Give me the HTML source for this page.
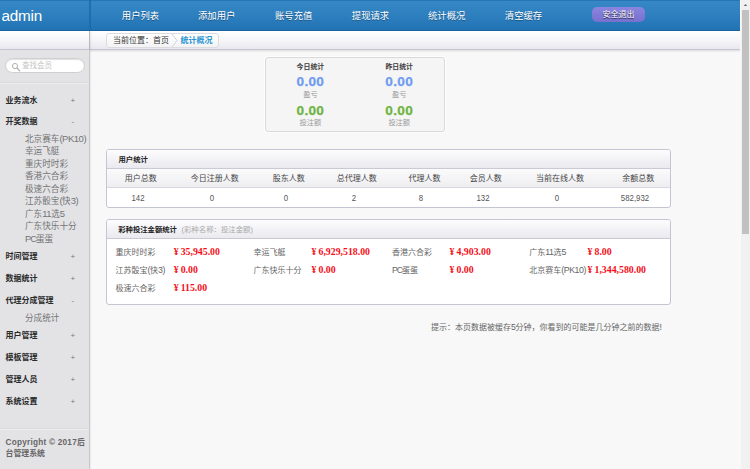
<!DOCTYPE html>
<html lang="zh-CN">
<head>
<meta charset="utf-8">
<title>后台管理系统</title>
<style>
*{margin:0;padding:0;box-sizing:border-box;}
html,body{width:750px;height:469px;overflow:hidden;background:#f8f8f8;}
body{position:relative;font-family:"Liberation Sans","Noto Sans CJK SC",sans-serif;color:#444;-webkit-text-size-adjust:none;}
.abs{position:absolute;white-space:nowrap;}
#hdr{position:absolute;left:0;top:0;width:740px;height:31px;background:linear-gradient(#3687c5 0%,#2f80bf 45%,#2273b4 100%);border-top:1px solid #2775b3;border-bottom:1px solid #1a63a0;}
#hdiv{position:absolute;left:89px;top:0;width:2px;height:31px;background:linear-gradient(90deg,#1f6aa6,#1c65a1);opacity:.75;}
#logo{left:1.5px;top:6px;font-size:15.3px;letter-spacing:-.25px;line-height:20px;color:#fff;}
.nav{top:8px;font-size:9.33px;line-height:16px;color:#fff;text-shadow:0 1px 0 rgba(0,0,0,.35);width:60px;text-align:center;}
#exit{position:absolute;left:592px;top:7px;width:53px;height:15px;border-radius:5px;background:linear-gradient(#8a85de,#7770d0);color:#fff;font-size:8px;line-height:15px;text-align:center;text-shadow:0 1px 1px rgba(0,0,0,.8);}
#sub{position:absolute;left:0;top:31px;width:740px;height:19px;background:linear-gradient(#fff 0%,#f6f6f9 50%,#e8e8ee 100%);border-bottom:1px solid #c6c6d2;box-shadow:0 1px 2px rgba(0,0,0,.13);}
#sdiv{position:absolute;left:89px;top:31px;width:1px;height:19px;background:#b9b9c4;box-shadow:1px 0 2px rgba(0,0,0,.12);}
#crumb{position:absolute;left:106px;top:33px;width:113px;height:15px;border:1px solid #dcdce0;border-radius:3px;background:linear-gradient(#fff,#f3f3f5);}
.c1{left:113px;top:35px;font-size:8px;line-height:12px;color:#333;}
.c2{left:180.5px;top:35px;font-size:8px;line-height:12px;color:#2e96d2;font-weight:bold;}
#side{position:absolute;left:0;top:50px;width:90px;height:419px;background:#e3e3e6;border-right:1px solid #cacace;box-shadow:1px 0 1px rgba(0,0,0,.05);}
#search{position:absolute;left:5px;top:58px;width:80px;height:15px;border-radius:8px;background:#fff;border:1px solid #cfcfcf;box-shadow:inset 0 1px 1px rgba(0,0,0,.12);}
.ph{left:22px;top:60px;font-size:7.5px;line-height:12px;color:#c4c4c4;}
.hr{position:absolute;left:0;width:89px;height:2px;background:#dadadc;border-bottom:1px solid #eeeeef;}
.m{left:5.5px;font-size:8px;font-weight:bold;color:#2a2a2a;line-height:12px;}
.pm{left:69.3px;width:7px;text-align:center;font-size:8px;color:#777;line-height:12px;}
.s{left:25px;font-size:8.6px;color:#747474;line-height:12px;}
.cp{left:5.5px;top:437px;font-size:8.2px;letter-spacing:.25px;font-weight:bold;color:#666;line-height:11px;white-space:normal;width:84px;}
.cj{font-size:7.9px;letter-spacing:0;}
.box{position:absolute;left:265px;top:57px;width:180px;height:75px;border:1px solid #dadada;border-radius:3px;background:#f5f5f5;box-shadow:0 0 0 1px rgba(255,255,255,.7);}
.panel{position:absolute;left:106px;width:565px;border:1px solid #c4c5d2;border-radius:3px;background:#fff;}
.pnh{position:absolute;left:0;top:0;right:0;height:19px;background:linear-gradient(#fdfdfe,#e9e9ef);border-bottom:1px solid #c9cad6;border-radius:2px 2px 0 0;}
.thr{position:absolute;left:0;right:0;top:19px;height:19px;background:linear-gradient(#fbfbfc,#eeeef1);border-bottom:1px solid #d6d7e0;}
.pt{font-size:7.35px;font-weight:bold;color:#222;line-height:12px;}
.pg{font-size:7.4px;line-height:12px;color:#aaa;}
.th{font-size:8px;color:#444;line-height:12px;width:80px;text-align:center;}
.td{font-size:9px;color:#555;line-height:12px;width:80px;text-align:center;transform:scaleX(.87);}
.lb{font-size:8px;color:#666;line-height:12px;}
.l{font-size:1.1em;letter-spacing:-.45px;line-height:1px;}
.pc{letter-spacing:-1.1px;}
.rv{font-family:"Liberation Serif",serif;font-weight:bold;font-size:9.8px;color:#f4101a;line-height:12px;}
.y{display:inline-block;width:7px;}
.big{font-family:"Liberation Sans",sans-serif;font-weight:bold;font-size:13.6px;letter-spacing:.3px;line-height:14px;width:60px;text-align:center;-webkit-text-stroke:.25px currentColor;}
.sm{font-size:7.2px;color:#999;line-height:10px;width:60px;text-align:center;}
.st{font-size:6.9px;font-weight:bold;color:#3c3c3c;line-height:10px;width:60px;text-align:center;}
.hint{left:431px;top:322px;font-size:8px;line-height:12px;color:#666;}
.sbt{position:absolute;left:740px;top:0;width:10px;height:469px;background:#f1f1f1;border-left:1px solid #f8f8f8;}
.sbh{position:absolute;left:742px;top:10px;width:7px;height:224px;background:#c1c1c1;}
</style>
</head>
<body>
<!-- header -->
<div id="hdr"></div>
<div id="hdiv"></div>
<div class="abs" id="logo">admin</div>
<div class="abs nav" style="left:110.5px;">用户列表</div>
<div class="abs nav" style="left:186.7px;">添加用户</div>
<div class="abs nav" style="left:263.7px;">账号充值</div>
<div class="abs nav" style="left:340.5px;">提现请求</div>
<div class="abs nav" style="left:416.7px;">统计概况</div>
<div class="abs nav" style="left:493.5px;">清空缓存</div>
<div id="exit">安全退出</div>
<!-- sub bar -->
<div id="sub"></div>
<div id="sdiv"></div>
<div id="crumb"></div>
<div class="abs c1">当前位置：首页</div>
<svg class="abs" style="left:170.7px;top:34px" width="8" height="13" viewBox="0 0 8 13"><path d="M1 0 L6 6.5 L1 13" fill="none" stroke="#d0d0d6" stroke-width="1"/></svg>
<div class="abs c2">统计概况</div>
<!-- sidebar -->
<div id="side"></div>
<div id="search"></div>
<svg class="abs" style="left:10.5px;top:61.8px" width="10" height="10" viewBox="0 0 10 10"><circle cx="4" cy="4" r="2.6" fill="none" stroke="#b2b2b2" stroke-width="1"/><path d="M6 6 L8.6 8.8" stroke="#b2b2b2" stroke-width="1.3" stroke-linecap="round"/></svg>
<div class="abs ph">查找会员</div>
<div class="hr" style="top:82px"></div>
<div class="abs m" style="top:95px;">业务流水</div>
<div class="abs pm" style="top:95px;">+</div>
<div class="abs m" style="top:116px;">开奖数据</div>
<div class="abs pm" style="top:116px;">-</div>
<div class="abs s" style="top:133px;">北京赛车<span class="l">(PK10)</span></div>
<div class="abs s" style="top:145px;">幸运飞艇</div>
<div class="abs s" style="top:158px;">重庆时时彩</div>
<div class="abs s" style="top:170px;">香港六合彩</div>
<div class="abs s" style="top:183px;">极速六合彩</div>
<div class="abs s" style="top:195px;">江苏骰宝<span class="l">(</span>快<span class="l">3)</span></div>
<div class="abs s" style="top:208px;">广东<span class="l">11</span>选<span class="l">5</span></div>
<div class="abs s" style="top:220px;">广东快乐十分</div>
<div class="abs s" style="top:233px;"><span class="l pc">PC</span>蛋蛋</div>
<div class="abs m" style="top:251px;">时间管理</div>
<div class="abs pm" style="top:251px;">+</div>
<div class="abs m" style="top:273px;">数据统计</div>
<div class="abs pm" style="top:273px;">+</div>
<div class="abs m" style="top:295px;">代理分成管理</div>
<div class="abs pm" style="top:295px;">-</div>
<div class="abs s" style="top:312px;">分成统计</div>
<div class="abs m" style="top:330px;">用户管理</div>
<div class="abs pm" style="top:330px;">+</div>
<div class="abs m" style="top:352px;">模板管理</div>
<div class="abs pm" style="top:352px;">+</div>
<div class="abs m" style="top:374px;">管理人员</div>
<div class="abs pm" style="top:374px;">+</div>
<div class="abs m" style="top:396px;">系统设置</div>
<div class="abs pm" style="top:396px;">+</div>
<div class="hr" style="top:428px"></div>
<div class="abs cp">Copyright © 2017<span class="cj">后<br>台管理系统</span></div>
<!-- stats box -->
<div class="box"></div>
<div class="abs st" style="left:280.4px;top:62px;">今日统计</div>
<div class="abs big" style="left:280.4px;top:75px;color:#6f9bf0">0.00</div>
<div class="abs sm" style="left:280.4px;top:90px;">盈亏</div>
<div class="abs big" style="left:280.4px;top:104px;color:#6db442">0.00</div>
<div class="abs sm" style="left:280.4px;top:118px;">投注额</div>
<div class="abs st" style="left:369.2px;top:62px;">昨日统计</div>
<div class="abs big" style="left:369.2px;top:75px;color:#6f9bf0">0.00</div>
<div class="abs sm" style="left:369.2px;top:90px;">盈亏</div>
<div class="abs big" style="left:369.2px;top:104px;color:#6db442">0.00</div>
<div class="abs sm" style="left:369.2px;top:118px;">投注额</div>
<!-- user stats panel -->
<div class="panel" style="top:149px;height:59px;"><div class="pnh"></div><div class="thr"></div></div>
<div class="abs pt" style="left:118.5px;top:154px;">用户统计</div>
<div class="abs th" style="left:100.8px;top:173px;">用户总数</div>
<div class="abs th" style="left:174.7px;top:173px;">今日注册人数</div>
<div class="abs th" style="left:248.8px;top:173px;">股东人数</div>
<div class="abs th" style="left:316.7px;top:173px;">总代理人数</div>
<div class="abs th" style="left:384.6px;top:173px;">代理人数</div>
<div class="abs th" style="left:445.7px;top:173px;">会员人数</div>
<div class="abs th" style="left:520px;top:173px;">当前在线人数</div>
<div class="abs th" style="left:598.2px;top:173px;">余额总数</div>
<div class="abs td" style="left:98.3px;top:192px;">142</div>
<div class="abs td" style="left:171.8px;top:192px;">0</div>
<div class="abs td" style="left:245.6px;top:192px;">0</div>
<div class="abs td" style="left:313.6px;top:192px;">2</div>
<div class="abs td" style="left:381.1px;top:192px;">8</div>
<div class="abs td" style="left:443px;top:192px;">132</div>
<div class="abs td" style="left:517.1px;top:192px;">0</div>
<div class="abs td" style="left:595px;top:192px;">582,932</div>
<!-- lottery panel -->
<div class="panel" style="top:219px;height:86px;"><div class="pnh"></div></div>
<div class="abs pt" style="left:118.2px;top:224px;">彩种投注金额统计</div>
<div class="abs pg" style="left:181.5px;top:224px;">(彩种名称：投注金额)</div>
<div class="abs lb" style="left:115.5px;top:247px;">重庆时时彩</div>
<div class="abs rv" style="left:173.7px;top:246px;"><span class="y">¥</span>35,945.00</div>
<div class="abs lb" style="left:253.5px;top:247px;">幸运飞艇</div>
<div class="abs rv" style="left:311.5px;top:246px;"><span class="y">¥</span>6,929,518.00</div>
<div class="abs lb" style="left:392px;top:247px;">香港六合彩</div>
<div class="abs rv" style="left:449.5px;top:246px;"><span class="y">¥</span>4,903.00</div>
<div class="abs lb" style="left:529.3px;top:247px;">广东<span class="l">11</span>选<span class="l">5</span></div>
<div class="abs rv" style="left:587.5px;top:246px;"><span class="y">¥</span>8.00</div>
<div class="abs lb" style="left:115.5px;top:265px;">江苏骰宝<span class="l">(</span>快<span class="l">3)</span></div>
<div class="abs rv" style="left:173.7px;top:264px;"><span class="y">¥</span>0.00</div>
<div class="abs lb" style="left:253.5px;top:265px;">广东快乐十分</div>
<div class="abs rv" style="left:311.5px;top:264px;"><span class="y">¥</span>0.00</div>
<div class="abs lb" style="left:392px;top:265px;"><span class="l pc">PC</span>蛋蛋</div>
<div class="abs rv" style="left:449.5px;top:264px;"><span class="y">¥</span>0.00</div>
<div class="abs lb" style="left:529.3px;top:265px;">北京赛车<span class="l">(PK10)</span></div>
<div class="abs rv" style="left:587.5px;top:264px;"><span class="y">¥</span>1,344,580.00</div>
<div class="abs lb" style="left:115.5px;top:283px;">极速六合彩</div>
<div class="abs rv" style="left:173.7px;top:282px;"><span class="y">¥</span>115.00</div>
<div class="abs hint">提示：本页数据被缓存<span class="l">5</span>分钟，你看到的可能是几分钟之前的数据<span class="l">!</span></div>
<!-- scrollbar -->
<div class="sbt"></div>
<div class="sbh"></div>
<svg class="abs" style="left:741px;top:0" width="9" height="9" viewBox="0 0 9 9"><path d="M2.7 6.1 L4.5 4.0 L6.3 6.1 Z" fill="#6a6a6a"/></svg>
</body>
</html>
